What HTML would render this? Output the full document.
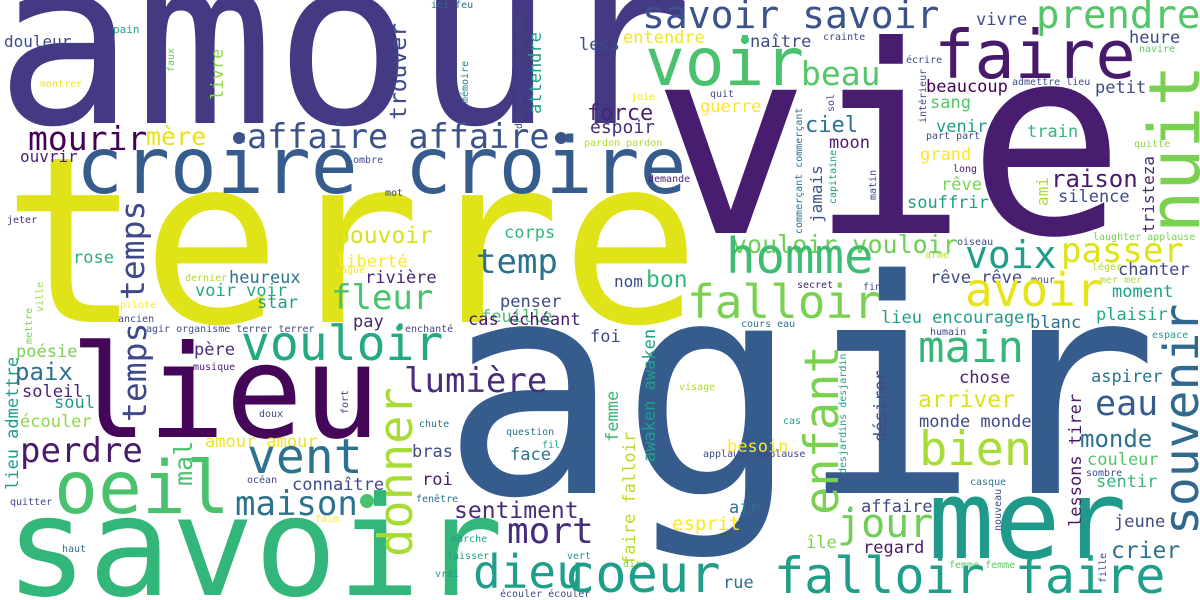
<!DOCTYPE html>
<html><head><meta charset="utf-8"><style>
html,body{margin:0;padding:0;background:#fff;width:1200px;height:600px;overflow:hidden}
svg{display:block}
text{font-family:"DejaVu Sans Mono","Liberation Mono",monospace}
</style></head><body>
<svg width="1200" height="600" viewBox="0 0 1200 600" xmlns="http://www.w3.org/2000/svg">
<rect width="1200" height="600" fill="#fff"/>
<text x="-5" y="123" font-size="232" fill="#443983">amour</text>
<text x="652" y="233" font-size="262" fill="#481c6e">vie</text>
<text x="2" y="322" font-size="232" fill="#dfe318">terre</text>
<text x="76" y="193" font-size="78" fill="#365c8d">croire croire</text>
<text x="441" y="493" font-size="298" fill="#365c8d">agir</text>
<text x="5" y="595" font-size="138" fill="#32b67a">savoir</text>
<text x="70" y="437" font-size="129" fill="#450559">lieu</text>
<text x="928" y="558" font-size="110" fill="#1f9a8a">mer</text>

<g>
<text transform="rotate(-90 1199 233)" x="1199" y="233" font-size="70" fill="#7ad151">nuit</text>
<text transform="rotate(-90 1198 535)" x="1198" y="535" font-size="48" fill="#31688e">souvenir</text>
<text transform="rotate(-90 838 515)" x="838" y="515" font-size="47" fill="#7ad151">enfant</text>
<text transform="rotate(-90 412 557)" x="412" y="557" font-size="47" fill="#a8db34">donner</text>
<text transform="rotate(-90 144 300)" x="144" y="300" font-size="33" fill="#3e4a89">temps</text>
<text transform="rotate(-90 146 422)" x="146" y="422" font-size="33" fill="#3e4a89">temps</text>
<text transform="rotate(-90 655 462)" x="655" y="462" font-size="17" fill="#1f9e89">awaken awaken</text>
<text transform="rotate(-90 635 565)" x="635" y="565" font-size="17" fill="#b5de2b">faire falloir</text>
<text transform="rotate(-90 1081 527)" x="1081" y="527" font-size="17" fill="#481a6c">lessons tirer</text>
<text transform="rotate(-90 886 442)" x="886" y="442" font-size="17" fill="#3e4a89">désirer</text>
<text transform="rotate(-90 618 442)" x="618" y="442" font-size="17" fill="#35b779">femme</text>
<text transform="rotate(-90 1154 233)" x="1154" y="233" font-size="16" fill="#482475">tristeza</text>
<text transform="rotate(-90 1048 206)" x="1048" y="206" font-size="16" fill="#addc30">ami</text>
<text transform="rotate(-90 822 223)" x="822" y="223" font-size="16" fill="#3b528b">jamais</text>
<text transform="rotate(-90 836 204)" x="836" y="204" font-size="10" fill="#1f9e89">capitaine</text>
<text transform="rotate(-90 876 200)" x="876" y="200" font-size="10" fill="#3e4a89">matin</text>
<text transform="rotate(-90 802 234)" x="802" y="234" font-size="10" fill="#2c728e">commerçant commerçant</text>
<text transform="rotate(-90 834 112)" x="834" y="112" font-size="10" fill="#3e4a89">sol</text>
<text transform="rotate(-90 926 123)" x="926" y="123" font-size="10" fill="#3e4a89">intérieur</text>
<text transform="rotate(-90 846 474)" x="846" y="474" font-size="10" fill="#1f9e89">desjardins desjardin</text>
<text transform="rotate(-90 1001 531)" x="1001" y="531" font-size="10" fill="#3e4a89">nouveau</text>
<text transform="rotate(-90 1106 583)" x="1106" y="583" font-size="10" fill="#3e4a89">fille</text>
<text transform="rotate(-90 192 486)" x="192" y="486" font-size="25" fill="#4ac16d">mal</text>
<text transform="rotate(-90 348 414)" x="348" y="414" font-size="10" fill="#3e4a89">fort</text>
<text transform="rotate(-90 18 490)" x="18" y="490" font-size="17" fill="#1f9e89">lieu admettre</text>
<text transform="rotate(-90 32 344)" x="32" y="344" font-size="10" fill="#7ad151">mettre</text>
<text transform="rotate(-90 43 312)" x="43" y="312" font-size="10" fill="#a0da39">ville</text>
<text transform="rotate(-90 522 129)" x="522" y="129" font-size="10" fill="#3e4a89">desjardin desjardin</text>
<text transform="rotate(-90 468 103)" x="468" y="103" font-size="10" fill="#26828e">mémoire</text>
<text transform="rotate(-90 541 114)" x="541" y="114" font-size="17" fill="#1f9e89">attendre</text>
<text transform="rotate(-90 223 100)" x="223" y="100" font-size="17" fill="#8fd744">livre</text>
<text transform="rotate(-90 406 120)" x="406" y="120" font-size="23" fill="#3e4a89">trouver</text>
<text transform="rotate(-90 174 72)" x="174" y="72" font-size="10" fill="#6ccd5a">faux</text>
</g>

<text x="4" y="47" font-size="16" fill="#3e4a89">douleur</text>
<text x="113" y="33" font-size="11" fill="#2a9d8a">pain</text>
<text x="40" y="87" font-size="10" fill="#f1e51d">montrer</text>
<text x="431" y="8" font-size="10" fill="#2c728e">ici feu</text>
<text x="28" y="150" font-size="33" fill="#440154">mourir</text>
<text x="146" y="145" font-size="25" fill="#e5e419">mère</text>
<text x="247" y="148" font-size="33.5" fill="#3b528b">affaire affaire</text>
<circle cx="239" cy="138" r="6" fill="#3b528b"/>
<circle cx="561" cy="138" r="6" fill="#3b528b"/>
<text x="20" y="162" font-size="16" fill="#481f70">ouvrir</text>
<text x="353" y="163" font-size="10" fill="#3e4a89">ombre</text>
<text x="385" y="196" font-size="10" fill="#3e4a89">mot</text>
<text x="7" y="223" font-size="10" fill="#472d7b">jeter</text>
<text x="336" y="243" font-size="23" fill="#d8e219">pouvoir</text>
<text x="504" y="238" font-size="17" fill="#35b779">corps</text>
<text x="73" y="263" font-size="17" fill="#2ab07f">rose</text>
<text x="476" y="273" font-size="34" fill="#2c728e">temp</text>
<text x="336" y="267" font-size="17" fill="#fde725">liberté</text>
<text x="335" y="273" font-size="10" fill="#fde725">vague</text>
<text x="185" y="281" font-size="10" fill="#addc30">dernier</text>
<text x="229" y="283" font-size="17" fill="#2c728e">heureux</text>
<text x="365" y="283" font-size="17" fill="#482475">rivière</text>
<text x="195" y="296" font-size="17" fill="#22a884">voir voir</text>
<text x="331" y="309" font-size="34" fill="#4ac16d">fleur</text>
<text x="481" y="322" font-size="17" fill="#4ac16d">feuille</text>

<text x="642" y="28" font-size="38" fill="#3b528b">savoir savoir</text>
<text x="1036" y="28" font-size="39" fill="#54c568">prendre</text>
<text x="976" y="25" font-size="17" fill="#3e4a89">vivre</text>
<text x="623" y="43" font-size="17" fill="#f1e51d">entendre</text>
<text x="579" y="50" font-size="17" fill="#3e4a89">less</text>
<text x="750" y="47" font-size="17" fill="#3e4a89">naître</text>
<circle cx="745" cy="40" r="4" fill="#35b779"/>
<text x="823" y="40" font-size="10" fill="#3e4a89">crainte</text>
<text x="1129" y="43" font-size="17" fill="#3e4a89">heure</text>
<text x="1139" y="52" font-size="10" fill="#5ec962">navire</text>
<text x="645" y="85" font-size="66" fill="#4ac16d">voir</text>
<text x="934" y="78" font-size="67" fill="#481a6c">faire</text>
<text x="801" y="85" font-size="33" fill="#54c568">beau</text>
<text x="906" y="63" font-size="10" fill="#3e4a89">écrire</text>
<text x="1012" y="85" font-size="10" fill="#3e4a89">admettre lieu</text>
<text x="926" y="92" font-size="17" fill="#440154">beaucoup</text>
<text x="1095" y="93" font-size="17" fill="#3e4a89">petit</text>
<text x="631" y="100" font-size="10" fill="#f1e51d">joie</text>
<text x="710" y="97" font-size="10" fill="#3e4a89">quit</text>
<text x="587" y="120" font-size="22" fill="#482475">force</text>
<text x="590" y="133" font-size="18" fill="#472d7b">espoir</text>
<text x="584" y="146" font-size="10" fill="#addc30">pardon pardon</text>
<text x="700" y="112" font-size="17" fill="#fde725">guerre</text>
<text x="930" y="108" font-size="17" fill="#54c568">sang</text>
<text x="805" y="132" font-size="22" fill="#2c728e">ciel</text>
<text x="936" y="132" font-size="17" fill="#1f9e89">venir</text>
<text x="1027" y="137" font-size="17" fill="#35b779">train</text>
<text x="926" y="139" font-size="10" fill="#3e4a89">part part</text>
<text x="829" y="148" font-size="17" fill="#481a6c">moon</text>
<text x="1134" y="147" font-size="10" fill="#8fd744">quitte</text>
<text x="920" y="160" font-size="17" fill="#fde725">grand</text>
<text x="953" y="172" font-size="10" fill="#481a6c">long</text>
<text x="648" y="182" font-size="10" fill="#482475">demande</text>
<text x="1051" y="187" font-size="24" fill="#481a6c">raison</text>
<text x="941" y="190" font-size="17" fill="#7ad151">rêve</text>
<text x="1058" y="202" font-size="17" fill="#3e4a89">silence</text>
<text x="907" y="208" font-size="17" fill="#1f9e89">souffrir</text>
<text x="732" y="253" font-size="25" fill="#6ece58">vouloir vouloir</text>
<text x="957" y="245" font-size="10" fill="#3e4a89">oiseau</text>
<text x="1093" y="240" font-size="10" fill="#7ad151">laughter applause</text>
<text x="726" y="273" font-size="49" fill="#3fbc73">homme</text>
<text x="965" y="268" font-size="38" fill="#1f9e89">voix</text>
<text x="1061" y="262" font-size="34" fill="#dde318">passer</text>
<text x="925" y="258" font-size="10" fill="#addc30">arme</text>
<text x="1092" y="270" font-size="10" fill="#addc30">léger</text>
<text x="1118" y="275" font-size="17" fill="#3e4a89">chanter</text>
<text x="930" y="283" font-size="17" fill="#3e4a89">rêve rêve</text>
<text x="1031" y="283" font-size="10" fill="#3e4a89">mour</text>
<text x="1100" y="283" font-size="10" fill="#addc30">mer mer</text>
<text x="1112" y="297" font-size="17" fill="#1f9e89">moment</text>
<text x="614" y="287" font-size="16" fill="#3e4a89">nom</text>
<text x="646" y="287" font-size="23" fill="#35b779">bon</text>
<text x="797" y="288" font-size="10" fill="#481a6c">secret</text>
<text x="863" y="290" font-size="10" fill="#3e4a89">fin</text>
<text x="687" y="318" font-size="46" fill="#7ad151">falloir</text>
<text x="965" y="306" font-size="46" fill="#e7e419">avoir</text>

<text x="120" y="308" font-size="10" fill="#fde725">pilote</text>
<text x="257" y="308" font-size="17" fill="#1f9e89">star</text>
<text x="500" y="307" font-size="17" fill="#3e4a89">penser</text>
<text x="118" y="322" font-size="10" fill="#3e4a89">ancien</text>
<text x="353" y="327" font-size="17" fill="#482475">pay</text>
<text x="468" y="325" font-size="17" fill="#481a6c">cas échéant</text>
<text x="146" y="332" font-size="10" fill="#3e4a89">agir organisme terrer terrer</text>
<text x="405" y="332" font-size="10" fill="#3e4a89">enchanté</text>
<circle cx="399" cy="328" r="3" fill="#35b779"/>
<text x="241" y="360" font-size="48" fill="#23a983">vouloir</text>
<text x="16" y="357" font-size="17" fill="#7ad151">poésie</text>
<text x="194" y="355" font-size="17" fill="#472d7b">père</text>
<text x="193" y="370" font-size="10" fill="#482475">musique</text>
<text x="15" y="380" font-size="24" fill="#2c728e">paix</text>
<text x="404" y="392" font-size="34" fill="#472d7b">lumière</text>
<text x="22" y="397" font-size="17" fill="#482475">soleil</text>
<text x="54" y="408" font-size="17" fill="#1f9e89">soul</text>
<text x="259" y="417" font-size="10" fill="#3e4a89">doux</text>
<text x="20" y="427" font-size="17" fill="#8fd744">écouler</text>
<text x="419" y="427" font-size="10" fill="#2c728e">chute</text>
<text x="506" y="435" font-size="10" fill="#2c728e">question</text>
<text x="205" y="447" font-size="17" fill="#f1e51d">amour amour</text>
<text x="542" y="448" font-size="10" fill="#1f9e89">fil</text>
<text x="20" y="462" font-size="34" fill="#481a6c">perdre</text>
<text x="412" y="457" font-size="17" fill="#3e4a89">bras</text>
<text x="510" y="460" font-size="17" fill="#2c728e">face</text>
<text x="247" y="473" font-size="48" fill="#2c728e">vent</text>
<text x="54" y="513" font-size="73" fill="#4ac16d">oeil</text>
<text x="422" y="485" font-size="17" fill="#481a6c">roi</text>
<text x="247" y="483" font-size="10" fill="#3e4a89">océan</text>
<text x="292" y="490" font-size="17" fill="#3e4a89">connaître</text>
<text x="10" y="505" font-size="10" fill="#3e4a89">quitter</text>
<text x="416" y="502" font-size="10" fill="#2c728e">fenêtre</text>
<text x="235" y="515" font-size="34" fill="#2c728e">maison</text>
<circle cx="367" cy="501" r="7" fill="#4ac16d"/>
<text x="454" y="518" font-size="23" fill="#472d7b">sentiment</text>
<text x="315" y="522" font-size="10" fill="#fde725">faim</text>
<text x="507" y="543" font-size="36" fill="#472d7b">mort</text>
<text x="451" y="542" font-size="10" fill="#1f9e89">marche</text>
<text x="62" y="552" font-size="10" fill="#2c728e">haut</text>
<text x="447" y="559" font-size="10" fill="#1f9e89">laisser</text>
<text x="567" y="559" font-size="10" fill="#1f9e89">vert</text>
<text x="473" y="588" font-size="46" fill="#1f9e89">dieu</text>
<text x="435" y="577" font-size="10" fill="#1f9e89">vrai</text>
<text x="500" y="597" font-size="10" fill="#3e4a89">écouler écouler</text>

<text x="741" y="327" font-size="10" fill="#2c728e">cours eau</text>
<text x="881" y="323" font-size="17" fill="#1f9e89">lieu encourager</text>
<text x="1030" y="328" font-size="17" fill="#2c728e">blanc</text>
<text x="1096" y="320" font-size="17" fill="#22a884">plaisir</text>
<text x="930" y="335" font-size="10" fill="#3e4a89">humain</text>
<text x="1152" y="338" font-size="10" fill="#1f9e89">espace</text>
<text x="590" y="342" font-size="17" fill="#3e4a89">foi</text>
<text x="918" y="362" font-size="44" fill="#35b779">main</text>
<text x="959" y="383" font-size="17" fill="#482475">chose</text>
<text x="1091" y="382" font-size="17" fill="#2c728e">aspirer</text>
<text x="679" y="390" font-size="10" fill="#addc30">visage</text>
<text x="918" y="407" font-size="23" fill="#dde318">arriver</text>
<text x="1095" y="415" font-size="35" fill="#365c8d">eau</text>
<text x="783" y="424" font-size="10" fill="#1f9e89">cas</text>
<text x="919" y="427" font-size="17" fill="#3e4a89">monde monde</text>
<text x="1080" y="447" font-size="24" fill="#2c728e">monde</text>
<text x="727" y="452" font-size="17" fill="#fde725">besoin</text>
<text x="703" y="457" font-size="10" fill="#3e4a89">applause applause</text>
<text x="919" y="465" font-size="47" fill="#a8db34">bien</text>
<text x="1087" y="465" font-size="17" fill="#54c568">couleur</text>
<text x="1086" y="476" font-size="10" fill="#3e4a89">sombre</text>
<text x="970" y="485" font-size="10" fill="#2c728e">casque</text>
<text x="1096" y="487" font-size="17" fill="#35b779">sentir</text>
<text x="861" y="512" font-size="17" fill="#3e4a89">affaire</text>
<circle cx="850" cy="510" r="2" fill="#1f9e89"/>
<text x="729" y="513" font-size="17" fill="#2c728e">air</text>
<text x="837" y="537" font-size="40" fill="#6ece58">jour</text>
<text x="672" y="530" font-size="19" fill="#fde725">esprit</text>
<text x="1114" y="527" font-size="17" fill="#3e4a89">jeune</text>
<text x="806" y="548" font-size="17" fill="#7ad151">île</text>
<text x="863" y="553" font-size="17" fill="#481a6c">regard</text>
<text x="1111" y="558" font-size="23" fill="#2c728e">crier</text>
<text x="623" y="567" font-size="10" fill="#7ad151">dire</text>
<text x="949" y="568" font-size="10" fill="#5ec962">femme femme</text>
<text x="564" y="592" font-size="52" fill="#1f9e89">coeur</text>
<text x="723" y="588" font-size="17" fill="#2c728e">rue</text>
<text x="774" y="593" font-size="50" fill="#1f9e89">falloir faire</text>
</svg>
</body></html>
